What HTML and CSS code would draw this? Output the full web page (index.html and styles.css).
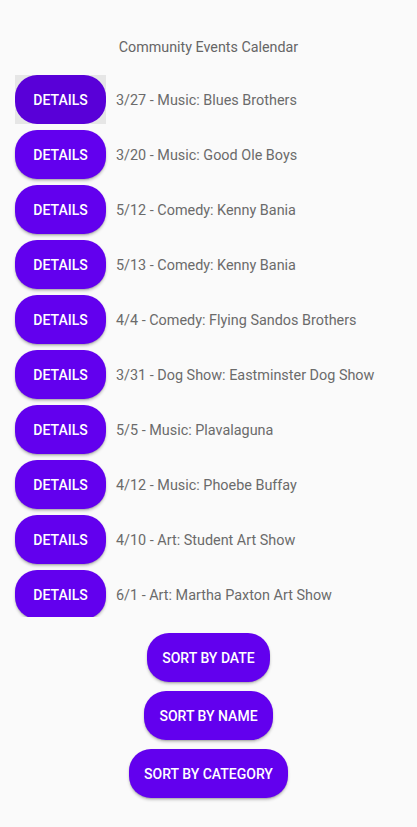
FILE: index.html
```html
<!DOCTYPE html>
<html>
<head>
<meta charset="utf-8">
<link rel="stylesheet" href="styles.css">
</head>
<body>
<div class="app">
  <div class="title">Community Events Calendar</div>
  <div class="list">
    <div class="row"><span class="focus"><button class="btn details pressed">DETAILS</button></span><span class="event">3/27 - Music: Blues Brothers</span></div>
    <div class="row"><button class="btn details">DETAILS</button><span class="event">3/20 - Music: Good Ole Boys</span></div>
    <div class="row"><button class="btn details">DETAILS</button><span class="event">5/12 - Comedy: Kenny Bania</span></div>
    <div class="row"><button class="btn details">DETAILS</button><span class="event">5/13 - Comedy: Kenny Bania</span></div>
    <div class="row"><button class="btn details">DETAILS</button><span class="event">4/4 - Comedy: Flying Sandos Brothers</span></div>
    <div class="row"><button class="btn details">DETAILS</button><span class="event">3/31 - Dog Show: Eastminster Dog Show</span></div>
    <div class="row"><button class="btn details">DETAILS</button><span class="event">5/5 - Music: Plavalaguna</span></div>
    <div class="row"><button class="btn details">DETAILS</button><span class="event">4/12 - Music: Phoebe Buffay</span></div>
    <div class="row"><button class="btn details">DETAILS</button><span class="event">4/10 - Art: Student Art Show</span></div>
    <div class="row"><button class="btn details">DETAILS</button><span class="event">6/1 - Art: Martha Paxton Art Show</span></div>
  </div>
  <div class="sorts">
    <button class="btn sort">SORT BY DATE</button>
    <button class="btn sort">SORT BY NAME</button>
    <button class="btn sort">SORT BY CATEGORY</button>
  </div>
</div>
</body>
</html>
```
FILE: styles.css
```css
html, body {
  margin: 0;
  padding: 0;
  background: #fafafa;
  font-family: Roboto, "Liberation Sans", sans-serif;
}
.app {
  width: 417px;
  height: 827px;
  display: flex;
  flex-direction: column;
}
.title {
  padding-top: 38px;
  height: 18px;
  line-height: 18px;
  text-align: center;
  font-size: 14.3px;
  color: #666666;
}
.list {
  margin-top: 19px;
  height: 542px;
  overflow: hidden;
  padding-left: 15px;
  display: flex;
  flex-direction: column;
}
.row {
  flex: none;
  height: 55px;
  display: flex;
  align-items: flex-start;
  gap: 10px;
}
.event {
  padding-top: 1px;
  line-height: 49px;
  font-size: 14.4px;
  color: #6b6b6b;
}
.btn {
  border: none;
  background: #6200ee;
  color: #ffffff;
  font-family: Roboto, "Liberation Sans", sans-serif;
  font-weight: 500;
  font-size: 14px;
  letter-spacing: 0;
  height: 49px;
  border-radius: 22px;
  box-shadow: 0 2px 3px rgba(0,0,0,0.22), 0 1px 1px rgba(0,0,0,0.12);
  padding: 0;
}
.details {
  width: 91px;
}
.focus {
  display: block;
  background: #e6e6e6;
  width: 91px;
  height: 49px;
}
.pressed {
  background: #5900d8;
  box-shadow: none;
}
.sorts {
  margin-top: 16px;
  display: flex;
  flex-direction: column;
  align-items: center;
  gap: 9px;
}
.sort {
  padding: 0 15px;
}
```
